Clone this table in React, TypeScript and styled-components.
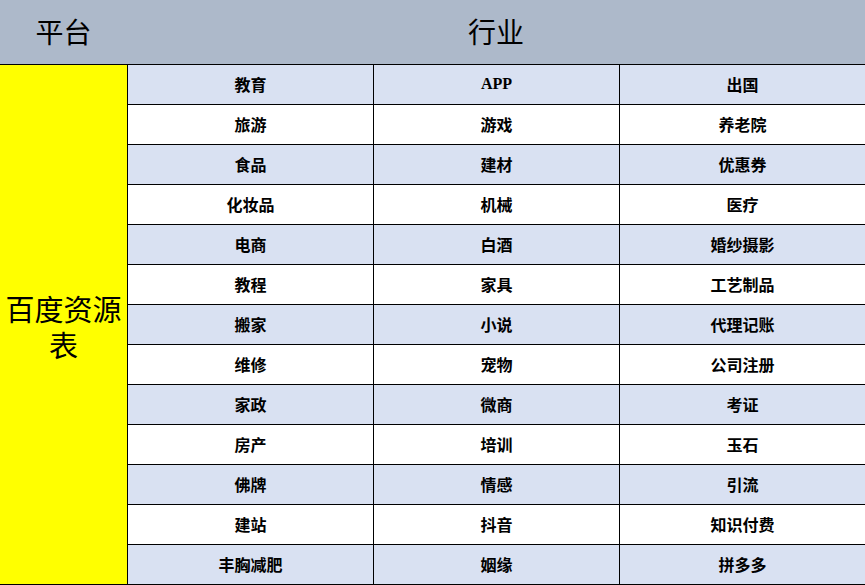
import React from 'react'
import styled, { createGlobalStyle } from 'styled-components'

const GlobalStyle = createGlobalStyle`
    html, body {
        margin: 0;
        padding: 0;
        background: #ffffff;
    }
    body {
        font-family: "Liberation Serif", "Noto Sans CJK SC", serif;
    }
`

const rows: string[][] = [
    ['教育', 'APP', '出国'],
    ['旅游', '游戏', '养老院'],
    ['食品', '建材', '优惠券'],
    ['化妆品', '机械', '医疗'],
    ['电商', '白酒', '婚纱摄影'],
    ['教程', '家具', '工艺制品'],
    ['搬家', '小说', '代理记账'],
    ['维修', '宠物', '公司注册'],
    ['家政', '微商', '考证'],
    ['房产', '培训', '玉石'],
    ['佛牌', '情感', '引流'],
    ['建站', '抖音', '知识付费'],
    ['丰胸减肥', '姻缘', '拼多多'],
]

const Sheet = styled.div`
    width: 865px;
    height: 585px;
    overflow: hidden;
`

const Header = styled.div`
    display: grid;
    grid-template-columns: 127px 1fr;
    height: 64px;
    background: #adb9ca;
    border-bottom: 1px solid #000;
`

const HeaderCell = styled.div`
    display: flex;
    align-items: center;
    justify-content: center;
    font-family: "Liberation Serif", "Noto Sans CJK SC", serif;
    font-size: 28px;
    color: #000;
    padding-bottom: 2px;
`

const Body = styled.div`
    display: grid;
    grid-template-columns: 127px repeat(3, 245px);
    grid-auto-rows: 39px;
    gap: 1px;
    background: #000;
    border-bottom: 1px solid #000;
`

const Platform = styled.div`
    grid-row: 1 / span 13;
    background: #ffff00;
    display: flex;
    align-items: center;
    justify-content: center;
    text-align: center;
    font-size: 29px;
    line-height: 36px;
    color: #000;
    padding: 8px 2px 0;
`

const Cell = styled.div<{ $shaded: boolean }>`
    display: flex;
    align-items: center;
    justify-content: center;
    background: ${p => (p.$shaded ? '#d9e1f2' : '#ffffff')};
    font-family: "Liberation Serif", "Noto Sans CJK SC", serif;
    font-weight: 700;
    font-size: 16px;
    color: #000;
    padding-bottom: 1px;
`

const App: React.FC = () => {
    return (
        <Sheet>
            <GlobalStyle />
            <Header>
                <HeaderCell>平台</HeaderCell>
                <HeaderCell>行业</HeaderCell>
            </Header>
            <Body>
                <Platform>百度资源表</Platform>
                {rows.map((row, i) =>
                    row.map((text, j) => (
                        <Cell key={`cell_${i}_${j}`} $shaded={i % 2 === 0}>
                            {text}
                        </Cell>
                    ))
                )}
            </Body>
        </Sheet>
    )
}

export default App
